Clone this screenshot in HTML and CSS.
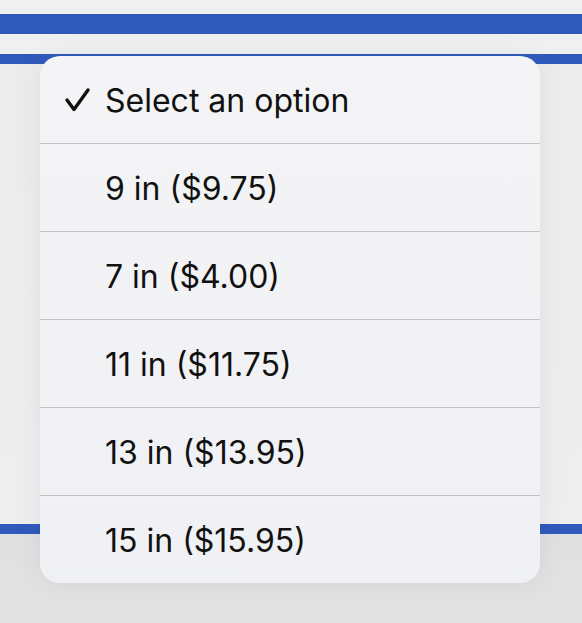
FILE: index.html
```html
<!DOCTYPE html>
<html lang="en">
<head>
<meta charset="utf-8">
<title>Select</title>
<link rel="stylesheet" href="styles.css">
</head>
<body>
<div class="page">
  <div class="top">
    <div class="bar bar-thick"></div>
    <div class="bar bar-thin"></div>
  </div>
  <div class="middle"></div>
  <div class="bar bar-bottom"></div>
  <div class="lower"></div>

  <ul class="menu" role="listbox">
    <li class="option selected" role="option">
      <span class="check">
        <svg width="28" height="28" viewBox="0 0 28 28" aria-hidden="true">
          <polyline points="3,14 10,23.5 24,4" fill="none" stroke="#111" stroke-width="3.4" stroke-linecap="round" stroke-linejoin="round"/>
        </svg>
      </span>
      <span class="label">Select an option</span>
    </li>
    <li class="option" role="option"><span class="check"></span><span class="label">9 in ($9.75)</span></li>
    <li class="option" role="option"><span class="check"></span><span class="label">7 in ($4.00)</span></li>
    <li class="option" role="option"><span class="check"></span><span class="label">11 in ($11.75)</span></li>
    <li class="option" role="option"><span class="check"></span><span class="label">13 in ($13.95)</span></li>
    <li class="option" role="option"><span class="check"></span><span class="label">15 in ($15.95)</span></li>
  </ul>
</div>
</body>
</html>
```
FILE: styles.css
```css
html, body {
  margin: 0;
  padding: 0;
}
body {
  width: 582px;
  height: 623px;
  overflow: hidden;
  background: #ededed;
  font-family: Inter, "Noto Sans", "Liberation Sans", sans-serif;
}
.page {
  position: relative;
  width: 582px;
  height: 623px;
  display: flex;
  flex-direction: column;
}
.top {
  background: #f0f0f0;
  padding-top: 14px;
  display: flex;
  flex-direction: column;
  gap: 20px;
}
.bar {
  background: #2f5abc;
}
.bar-thick { height: 20px; }
.bar-thin { height: 10px; }
.middle {
  height: 460px;
  background: linear-gradient(#ececec, #eeeeee);
}
.bar-bottom { height: 10px; }
.lower {
  flex: 1;
  background: linear-gradient(#e0e0e0, #e2e2e2);
}
.menu {
  position: absolute;
  left: 40px;
  top: 56px;
  width: 500px;
  margin: 0;
  padding: 0;
  list-style: none;
  background: linear-gradient(#f4f4f6, #f0f1f5);
  border-radius: 20px;
  box-shadow: 0 0 30px rgba(0, 0, 0, 0.06);
  overflow: hidden;
}
.option {
  height: 87px;
  display: flex;
  align-items: center;
  border-top: 1px solid #c3c3c5;
  color: #111;
  font-size: 32px;
  letter-spacing: 0;
}
.option:first-child {
  border-top: none;
}
.check {
  width: 65px;
  flex: none;
  display: flex;
  justify-content: flex-end;
}
.check svg {
  display: block;
  margin-right: 13px;
}
.label {
  padding-top: 1px;
}
```
